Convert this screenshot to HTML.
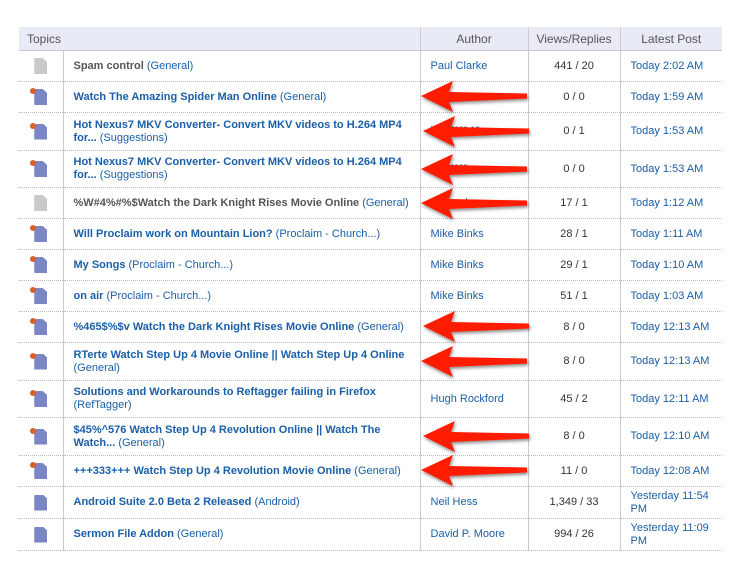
<!DOCTYPE html>
<html><head><meta charset="utf-8"><style>
body{margin:0;background:#fff;font-family:"Liberation Sans",Arial,sans-serif;font-size:11px;}
table{position:absolute;left:19px;top:27px;width:703px;border-collapse:collapse;table-layout:fixed}
th{background:#e8eaf6;color:#555;font-weight:normal;font-size:12px;height:23px;border-bottom:1px solid #c8c8d0;border-left:1px solid #ccc;text-align:center;padding:0}
th:first-child{border-left:none;text-align:left;padding-left:8px}
td{border-bottom:1px dotted #bbb;padding:0;vertical-align:middle;line-height:13px}
td.ic{text-align:center}
td.t{padding-left:10px;border-left:1px solid #ccc;color:#1a5fa8}
td.a{padding-left:10px;border-left:1px solid #ccc;color:#1a5fa8}
td.v{text-align:center;border-left:1px solid #ccc;color:#333}
td.l{padding-left:10px;border-left:1px solid #ccc;color:#1a5fa8}
b{color:#1a5fa8}
b.g{color:#555}
.doc{display:inline-block;width:13px;height:16px;background:#7b86c4;position:relative;vertical-align:middle;clip-path:polygon(0 0,65% 0,100% 25%,100% 100%,0 100%)}
.w{position:relative;display:inline-block}
.dot{position:absolute;left:-4px;top:-1px;width:6px;height:6px;border-radius:3px;background:#d9602a}
.gr{background:#c9c9c9}
</style></head><body>
<table>
<colgroup><col style="width:44px"><col style="width:357px"><col style="width:108px"><col style="width:92px"><col style="width:102px"></colgroup>
<tr><th colspan="2">Topics</th><th>Author</th><th>Views/Replies</th><th>Latest Post</th></tr>
<tr style="height:31px"><td class="ic"><span class="doc gr"></span></td><td class="t"><b class="g">Spam control</b> (General)</td><td class="a">Paul Clarke</td><td class="v">441 / 20</td><td class="l">Today 2:02 AM</td></tr>
<tr style="height:31px"><td class="ic"><span class="w"><span class="doc"></span><span class="dot"></span></span></td><td class="t"><b>Watch The Amazing Spider Man Online</b> (General)</td><td class="a">sama44</td><td class="v">0 / 0</td><td class="l">Today 1:59 AM</td></tr>
<tr style="height:38px"><td class="ic"><span class="w"><span class="doc"></span><span class="dot"></span></span></td><td class="t"><b>Hot Nexus7 MKV Converter- Convert MKV videos to H.264 MP4 for...</b> (Suggestions)</td><td class="a">lanai9l040</td><td class="v">0 / 1</td><td class="l">Today 1:53 AM</td></tr>
<tr style="height:37px"><td class="ic"><span class="w"><span class="doc"></span><span class="dot"></span></span></td><td class="t"><b>Hot Nexus7 MKV Converter- Convert MKV videos to H.264 MP4 for...</b> (Suggestions)</td><td class="a">lanai9l0</td><td class="v">0 / 0</td><td class="l">Today 1:53 AM</td></tr>
<tr style="height:31px"><td class="ic"><span class="doc gr"></span></td><td class="t"><b class="g">%W#4%#%$Watch the Dark Knight Rises Movie Online</b> (General)</td><td class="a">Samuel</td><td class="v">17 / 1</td><td class="l">Today 1:12 AM</td></tr>
<tr style="height:31px"><td class="ic"><span class="w"><span class="doc"></span><span class="dot"></span></span></td><td class="t"><b>Will Proclaim work on Mountain Lion?</b> (Proclaim - Church...)</td><td class="a">Mike Binks</td><td class="v">28 / 1</td><td class="l">Today 1:11 AM</td></tr>
<tr style="height:31px"><td class="ic"><span class="w"><span class="doc"></span><span class="dot"></span></span></td><td class="t"><b>My Songs</b> (Proclaim - Church...)</td><td class="a">Mike Binks</td><td class="v">29 / 1</td><td class="l">Today 1:10 AM</td></tr>
<tr style="height:31px"><td class="ic"><span class="w"><span class="doc"></span><span class="dot"></span></span></td><td class="t"><b>on air</b> (Proclaim - Church...)</td><td class="a">Mike Binks</td><td class="v">51 / 1</td><td class="l">Today 1:03 AM</td></tr>
<tr style="height:31px"><td class="ic"><span class="w"><span class="doc"></span><span class="dot"></span></span></td><td class="t"><b>%465$%$v Watch the Dark Knight Rises Movie Online</b> (General)</td><td class="a">s</td><td class="v">8 / 0</td><td class="l">Today 12:13 AM</td></tr>
<tr style="height:38px"><td class="ic"><span class="w"><span class="doc"></span><span class="dot"></span></span></td><td class="t"><b>RTerte Watch Step Up 4 Movie Online || Watch Step Up 4 Online</b> (General)</td><td class="a">s</td><td class="v">8 / 0</td><td class="l">Today 12:13 AM</td></tr>
<tr style="height:37px"><td class="ic"><span class="w"><span class="doc"></span><span class="dot"></span></span></td><td class="t"><b>Solutions and Workarounds to Reftagger failing in Firefox</b> (RefTagger)</td><td class="a">Hugh Rockford</td><td class="v">45 / 2</td><td class="l">Today 12:11 AM</td></tr>
<tr style="height:38px"><td class="ic"><span class="w"><span class="doc"></span><span class="dot"></span></span></td><td class="t"><b>$45%^576 Watch Step Up 4 Revolution Online || Watch The Watch...</b> (General)</td><td class="a">s</td><td class="v">8 / 0</td><td class="l">Today 12:10 AM</td></tr>
<tr style="height:31px"><td class="ic"><span class="w"><span class="doc"></span><span class="dot"></span></span></td><td class="t"><b>+++333+++ Watch Step Up 4 Revolution Movie Online</b> (General)</td><td class="a">s</td><td class="v">11 / 0</td><td class="l">Today 12:08 AM</td></tr>
<tr style="height:32px"><td class="ic"><span class="doc"></span></td><td class="t"><b>Android Suite 2.0 Beta 2 Released</b> (Android)</td><td class="a">Neil Hess</td><td class="v">1,349 / 33</td><td class="l">Yesterday 11:54 PM</td></tr>
<tr style="height:32px"><td class="ic"><span class="doc"></span></td><td class="t"><b>Sermon File Addon</b> (General)</td><td class="a">David P. Moore</td><td class="v">994 / 26</td><td class="l">Yesterday 11:09 PM</td></tr>
</table>
<svg width="741" height="566" style="position:absolute;left:0;top:0">
<defs><g id="ar"><polygon points="0,0 32,-15 28,-4 106,-2.5 106,2.5 28,6 32,16" fill="#ff1a00"/></g>
<filter id="sh"><feDropShadow dx="1" dy="2" stdDeviation="1.5" flood-color="#000" flood-opacity="0.45"/></filter></defs>
<g filter="url(#sh)">
<use href="#ar" x="421" y="96"/><use href="#ar" x="423" y="131"/><use href="#ar" x="421" y="169"/><use href="#ar" x="421" y="203"/>
<use href="#ar" x="423" y="326"/><use href="#ar" x="421" y="361"/><use href="#ar" x="423" y="436"/><use href="#ar" x="421" y="470"/>
</g></svg>
</body></html>
